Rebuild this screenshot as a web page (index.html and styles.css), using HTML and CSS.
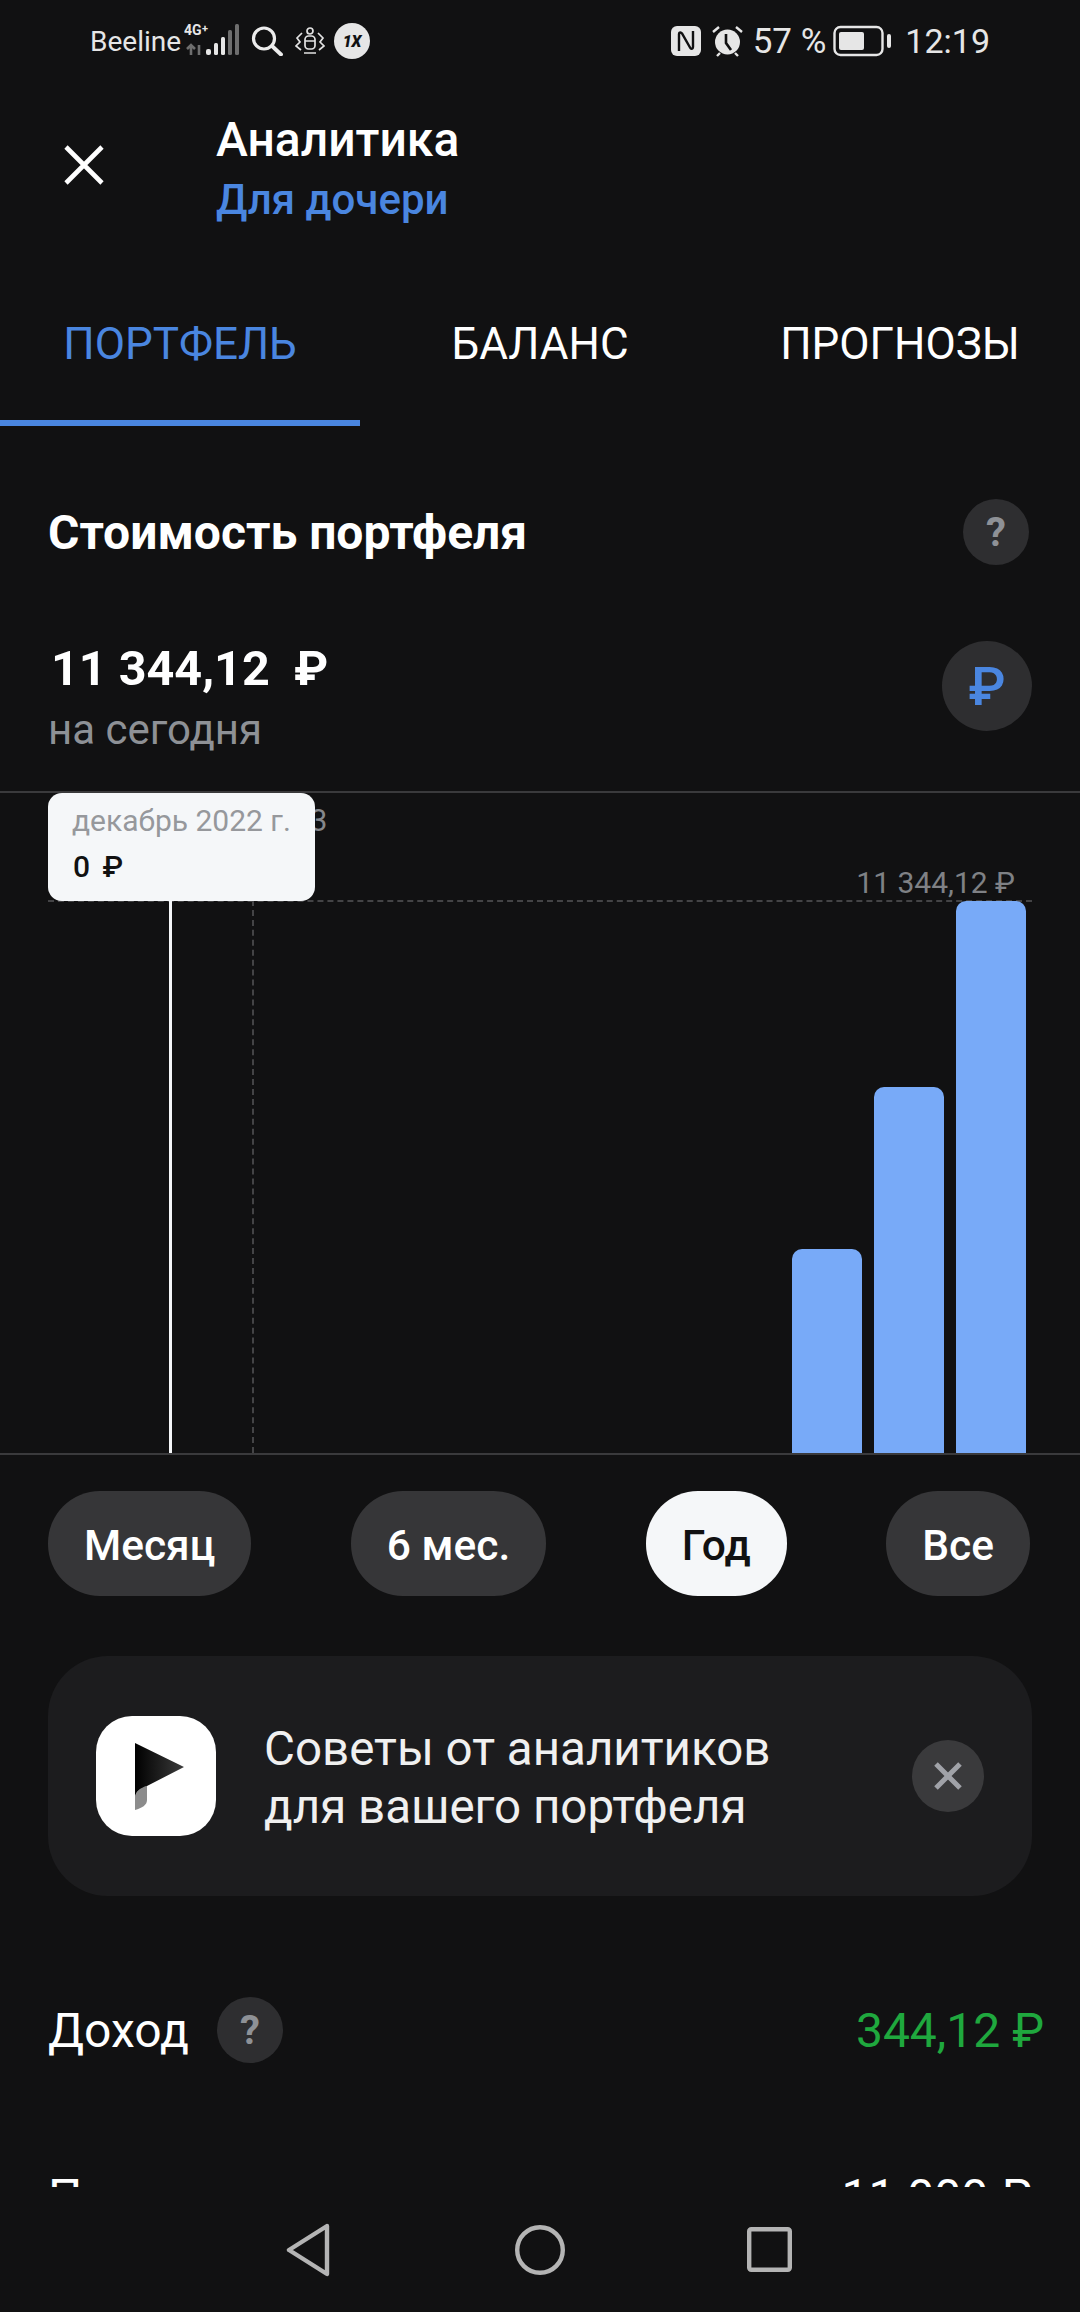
FILE: index.html
```html
<!DOCTYPE html>
<html lang="ru">
<head>
  <meta charset="UTF-8" />
  <meta name="viewport" content="width=device-width, initial-scale=1.0" />
  <title>Аналитика</title>
  <link rel="stylesheet" href="styles.css">
</head>
<body>
  <div class="screen">
    <div class="scroll">
      <div class="statusbar">
        <div class="status-left">
          <span class="carrier">Beeline</span>
          <svg class="ic-signal" width="56" height="36" viewBox="0 0 56 36">
            <text x="0" y="12" class="net">4G</text>
            <text x="18" y="9" class="net net-plus">+</text>
            <path d="M7 22v10M3 26l4-4 4 4" stroke="#6e6e6e" stroke-width="2.6" fill="none"/>
            <path d="M15 22v10" stroke="#6e6e6e" stroke-width="2.6"/>
            <rect x="22" y="26" width="5" height="6" rx="2" fill="#e6e6e6"/>
            <rect x="30" y="20" width="4" height="12" rx="1.5" fill="#e6e6e6"/>
            <rect x="37" y="14" width="4" height="18" rx="1.5" fill="#e6e6e6"/>
            <rect x="44" y="7" width="4" height="25" rx="1.5" fill="#6e6e6e"/>
            <rect x="51" y="1" width="4" height="31" rx="1.5" fill="#6e6e6e"/>
          </svg>
          <svg class="ic-search" width="32" height="30" viewBox="0 0 32 30">
            <circle cx="13" cy="12.5" r="10.5" fill="none" stroke="#ececec" stroke-width="3.2"/>
            <path d="M21 20l9 8.5" stroke="#ececec" stroke-width="3.8" stroke-linecap="round"/>
          </svg>
          <svg class="ic-bot" width="30" height="28" viewBox="0 0 30 28" fill="none" stroke="#e2e2e2" stroke-width="1.7">
            <circle cx="15" cy="4" r="3"/>
            <rect x="10" y="9" width="10" height="13" rx="3.5"/>
            <path d="M10 14h10M7 6L2 11l3 4-4 4 5 4M23 6l5 5-3 4 4 4-5 4M9 26h12"/>
          </svg>
          <span class="one-x">1X</span>
        </div>
        <div class="status-right">
          <svg width="30" height="30" viewBox="0 0 30 30">
            <rect width="30" height="30" rx="6" fill="#e6e6e6"/>
            <path d="M8 25V8c0-2 2-2 3-.5l8 14c1 2 3 1.5 3-.5V5" fill="none" stroke="#111112" stroke-width="2.4"/>
          </svg>
          <svg class="ic-alarm" width="33" height="31" viewBox="0 0 33 31">
            <circle cx="16.5" cy="16" r="12.5" fill="#e6e6e6"/>
            <path d="M15 8v9l5 7" fill="none" stroke="#111112" stroke-width="2.6"/>
            <path d="M2 6l6-5M31 6l-6-5M6 30l3-3M27 30l-3-3" stroke="#e6e6e6" stroke-width="2.4"/>
          </svg>
          <span class="pct">57 %</span>
          <svg width="59" height="32" viewBox="0 0 59 32">
            <rect x="1.5" y="2" width="48" height="28" rx="6" fill="none" stroke="#e6e6e6" stroke-width="2.4"/>
            <rect x="6" y="7" width="25" height="18" rx="2" fill="#e6e6e6"/>
            <rect x="54" y="9" width="4" height="14" rx="2" fill="#e6e6e6"/>
          </svg>
          <span class="clock">12:19</span>
        </div>
      </div>

      <header class="topbar">
        <svg class="ic-close" width="44" height="44" viewBox="0 0 44 44">
          <path d="M4 4l36 36M40 4L4 40" stroke="#fff" stroke-width="4.6"/>
        </svg>
        <div class="titles">
          <div class="title">Аналитика</div>
          <div class="subtitle">Для дочери</div>
        </div>
      </header>

      <nav class="tabs">
        <a class="tab active" href="#">ПОРТФЕЛЬ</a>
        <a class="tab" href="#">БАЛАНС</a>
        <a class="tab" href="#">ПРОГНОЗЫ</a>
      </nav>

      <section class="summary">
        <div class="summary-head">
          <h2>Стоимость портфеля</h2>
          <span class="help">?</span>
        </div>
        <div class="summary-value">
          <div>
            <div class="amount">11 344,12&nbsp; ₽</div>
            <div class="today">на сегодня</div>
          </div>
          <span class="currency">₽</span>
        </div>
      </section>

      <div class="chart">
        <span class="peek">3</span>
        <span class="max-label">11 344,12 ₽</span>
        <div class="grid-h"></div>
        <div class="grid-v"></div>
        <div class="cursor"></div>
        <div class="tooltip">
          <div class="tip-date">декабрь 2022 г.</div>
          <div class="tip-value">0 ₽</div>
        </div>
        <div class="bars">
          <div class="bar bar-1"></div>
          <div class="bar bar-2"></div>
          <div class="bar bar-3"></div>
        </div>
      </div>

      <div class="periods">
        <button class="pill">Месяц</button>
        <button class="pill">6 мес.</button>
        <button class="pill on">Год</button>
        <button class="pill">Все</button>
      </div>

      <div class="promo">
        <div class="promo-logo">
          <svg width="120" height="120" viewBox="0 0 120 120">
            <defs>
              <linearGradient id="flag" x1="0" x2="1" y1="0" y2="0">
                <stop offset="0" stop-color="#000"/>
                <stop offset="1" stop-color="#3c3c3c"/>
              </linearGradient>
            </defs>
            <path d="M39 94V82c0-6 5-10 12-12V84c0 5-5 8-12 10z" fill="#8c8c8c"/>
            <path d="M39 27L88 51 51 70c-7 2-12 6-12 12z" fill="url(#flag)"/>
          </svg>
        </div>
        <div class="promo-text">Советы от аналитиков<br>для вашего портфеля</div>
        <span class="promo-close">
          <svg width="30" height="30" viewBox="0 0 30 30">
            <path d="M3 3l24 24M27 3L3 27" stroke="#a0a2a8" stroke-width="5"/>
          </svg>
        </span>
      </div>

      <div class="row">
        <div class="row-name">Доход <span class="help">?</span></div>
        <div class="row-value green">344,12 ₽</div>
      </div>
      <div class="row row-next">
        <div class="row-name">Пополнения</div>
        <div class="row-value">11 000 ₽</div>
      </div>
    </div>

    <div class="navbar">
      <svg width="44" height="54" viewBox="0 0 44 54">
        <path d="M41 3L3 27l38 24z" fill="none" stroke="#b4b4b4" stroke-width="4.4" stroke-linejoin="round"/>
      </svg>
      <svg class="nav-home" width="50" height="50" viewBox="0 0 50 50">
        <circle cx="25" cy="25" r="22.8" fill="none" stroke="#b4b4b4" stroke-width="4.4"/>
      </svg>
      <svg width="45" height="45" viewBox="0 0 45 45">
        <rect x="2.2" y="2.2" width="40.6" height="40.6" rx="2" fill="none" stroke="#b4b4b4" stroke-width="4.4"/>
      </svg>
    </div>
  </div>
</body>
</html>
```

FILE: styles.css
```css
* {
  box-sizing: border-box;
}
body {
  margin: 0;
  background-color: #111112;
  color: white;
  font-family: Roboto, sans-serif;
}
.screen {
  width: 1080px;
  height: 2312px;
  display: flex;
  flex-direction: column;
  overflow: hidden;
}
.scroll {
  height: 2187px;
  overflow: hidden;
}

/* status bar */
.statusbar {
  height: 82px;
  padding: 0 90px;
  display: flex;
  justify-content: space-between;
  align-items: center;
  color: #e6e6e6;
}
.status-left, .status-right {
  display: flex;
  align-items: center;
}
.carrier {
  font-size: 28px;
}
.net {
  font-family: Roboto, sans-serif;
  font-size: 14px;
  font-weight: 700;
  fill: #e6e6e6;
}
.net-plus {
  font-size: 11px;
}
.ic-signal {
  margin-left: 3px;
}
.ic-search {
  margin-left: 11px;
}
.ic-bot {
  margin-left: 12px;
}
.one-x {
  width: 36px;
  height: 36px;
  margin-left: 9px;
  border-radius: 50%;
  background-color: #e6e6e6;
  color: #111112;
  font-size: 16px;
  font-weight: 900;
  font-style: italic;
  display: flex;
  align-items: center;
  justify-content: center;
}
.ic-alarm {
  margin-left: 10px;
}
.pct {
  font-size: 35px;
  margin-left: 9px;
  margin-right: 7px;
}
.clock {
  font-size: 34px;
  margin-left: 13px;
}

/* header */
.topbar {
  height: 218px;
  padding: 32px 0 0 62px;
  display: flex;
  align-items: flex-start;
}
.ic-close {
  margin-top: 29px;
}
.titles {
  margin-left: 110px;
}
.title {
  font-size: 48px;
  font-weight: 500;
  line-height: 52px;
}
.subtitle {
  margin-top: 8px;
  font-size: 42px;
  font-weight: 500;
  line-height: 52px;
  color: #4a86e0;
}

/* tabs */
.tabs {
  height: 126px;
  display: flex;
}
.tab {
  flex: 1;
  padding-top: 20px;
  text-align: center;
  text-decoration: none;
  color: white;
  font-size: 44px;
  line-height: 48px;
}
.tab.active {
  color: #4a86e0;
  border-bottom: 6px solid #4a86e0;
}

/* summary */
.summary {
  height: 367px;
  padding: 73px 48px 0;
  border-bottom: 2px solid #3a3a3c;
}
.summary-head, .summary-value {
  display: flex;
  justify-content: space-between;
}
.summary-head {
  align-items: center;
  padding-right: 3px;
}
.summary-head h2 {
  margin: 0;
  font-size: 48px;
  font-weight: 700;
}
.help {
  width: 66px;
  height: 66px;
  border-radius: 50%;
  background-color: #2e2e30;
  color: #8e9196;
  font-size: 40px;
  font-weight: 700;
  display: inline-flex;
  align-items: center;
  justify-content: center;
}
.summary-value {
  margin-top: 76px;
  align-items: flex-start;
}
.amount {
  margin-left: 3px;
  font-size: 48.5px;
  font-weight: 700;
  line-height: 55px;
}
.today {
  margin-top: 11px;
  font-size: 42px;
  line-height: 46px;
  color: #8e9196;
}
.currency {
  width: 90px;
  height: 90px;
  border-radius: 50%;
  background-color: #2e2e30;
  color: #4a86e0;
  font-size: 54px;
  font-weight: 500;
  display: flex;
  align-items: center;
  justify-content: center;
}

/* chart canvas, the things inside sit on top of each other */
.chart {
  position: relative;
  height: 662px;
  border-bottom: 2px solid #3a3a3c;
}
.peek {
  position: absolute;
  left: 310px;
  top: 9px;
  font-size: 31px;
  color: #85878b;
}
.max-label {
  position: absolute;
  right: 65px;
  top: 72px;
  font-size: 30px;
  color: #7f8185;
}
.grid-h {
  position: absolute;
  left: 48px;
  top: 107px;
  width: 984px;
  border-top: 2px dashed #444446;
}
.grid-v {
  position: absolute;
  left: 252px;
  top: 107px;
  bottom: 0;
  border-left: 2px dashed #444446;
}
.cursor {
  position: absolute;
  left: 169px;
  top: 107px;
  bottom: 0;
  width: 3px;
  background-color: #f4f6f8;
}
.tooltip {
  position: absolute;
  left: 48px;
  top: 0;
  width: 267px;
  height: 108px;
  padding: 9px 24px;
  border-radius: 14px;
  background-color: #f5f7f9;
}
.tip-date {
  font-size: 30px;
  line-height: 38px;
  color: #96989c;
}
.tip-value {
  margin: 8px 0 0 1px;
  font-size: 30px;
  font-weight: 500;
  line-height: 38px;
  word-spacing: 5px;
  color: #111112;
}
.bars {
  position: absolute;
  right: 54px;
  bottom: 0;
  display: flex;
  align-items: flex-end;
  gap: 12px;
}
.bar {
  width: 70px;
  border-radius: 10px 10px 0 0;
  background-color: #78aaf8;
}
.bar-1 {
  height: 204px;
}
.bar-2 {
  height: 366px;
}
.bar-3 {
  height: 552px;
}

/* period switch */
.periods {
  margin-top: 36px;
  padding: 0 50px 0 48px;
  display: flex;
  justify-content: space-between;
}
.pill {
  height: 105px;
  padding: 4px 36px 0;
  border: none;
  border-radius: 52px;
  background-color: #363638;
  color: white;
  font-family: Roboto, sans-serif;
  font-size: 42.5px;
  font-weight: 500;
}
.pill.on {
  background-color: #f5f7f9;
  color: #111112;
}

/* promo card */
.promo {
  height: 240px;
  margin: 60px 48px 0;
  padding: 0 48px;
  border-radius: 60px;
  background-color: #1c1c1e;
  display: flex;
  align-items: center;
}
.promo-logo {
  width: 120px;
  height: 120px;
  border-radius: 36px;
  background-color: white;
}
.promo-text {
  flex: 1;
  margin-left: 48px;
  padding-top: 3px;
  font-size: 47.5px;
  line-height: 58px;
  color: #f0f0f0;
}
.promo-close {
  width: 72px;
  height: 72px;
  border-radius: 50%;
  background-color: #3a3a3c;
  display: flex;
  align-items: center;
  justify-content: center;
}

/* rows */
.row {
  margin-top: 101px;
  padding: 0 36px 0 48px;
  height: 66px;
  display: flex;
  justify-content: space-between;
  align-items: center;
}
.row-name {
  font-size: 48px;
  display: flex;
  align-items: center;
  gap: 28px;
}
.row-value {
  font-size: 48px;
}
.green {
  color: #1fa83e;
}
.row-next {
  margin-top: 100px;
  padding-right: 48px;
}

/* android nav */
.navbar {
  flex: 1;
  padding: 0 288px 0 286px;
  display: flex;
  justify-content: space-between;
  align-items: center;
  background-color: #111112;
}
.nav-home {
  margin-left: 3px;
}
```
